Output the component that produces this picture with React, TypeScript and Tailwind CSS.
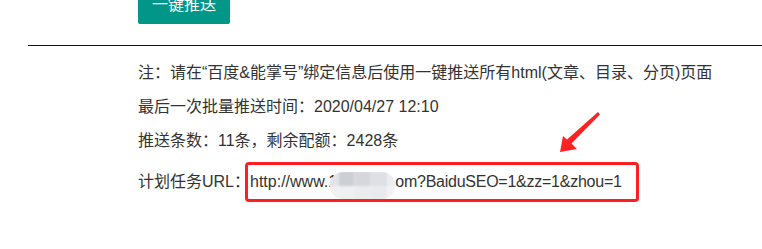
import React from 'react';

const mosaicTop = ['bg-[#e3e4e8]', 'bg-[#cdcfd6]', 'bg-[#d5d7dd]', 'bg-[#dfe0e5]', 'bg-[#ecedf0]'];
const mosaicBottom = ['bg-[#f1f1f3]', 'bg-[#eeeff1]', 'bg-[#ebecee]', 'bg-[#e9eaed]', 'bg-[#f2f2f4]'];
const mosaicCols = ['w-[11px]', 'w-[14px]', 'w-[15px]', 'w-[15px]', 'w-[10px]'];

const Mosaic: React.FC = () => (
  <div className="absolute left-[82px] top-[7px] w-[65px] h-[27px] rounded-[13px] overflow-hidden">
    <div className="flex flex-col w-full h-full blur-[1px] scale-110">
      {[mosaicTop, mosaicBottom].map((row, r) => (
        <div key={r} className="flex flex-1">
          {row.map((c, i) => (
            <div key={i} className={`${mosaicCols[i]} h-full ${c}`} />
          ))}
        </div>
      ))}
    </div>
  </div>
);

const App: React.FC = () => {
  return (
    <div className="relative w-[762px] h-[249px] overflow-hidden bg-white text-[#333] text-[16px] font-['Liberation_Sans','Noto_Sans_CJK_SC',sans-serif]">
      {/* push button, cut off at the top */}
      <div className="pl-[138px]">
        <button
          type="button"
          className="-mt-[14px] w-[92px] h-[38px] bg-[#009688] text-white text-[16px] rounded-[2px] flex items-center justify-center"
        >
          一键推送
        </button>
      </div>

      <div className="mt-[21px] ml-[28px] h-px bg-[#111]" />

      <div className="pl-[138px] pt-[10px]">
        <div className="h-[34px] flex items-center whitespace-nowrap">
          注：请在“百度&amp;能掌号”绑定信息后使用一键推送所有html(文章、目录、分页)页面
        </div>
        <div className="h-[34px] flex items-center whitespace-nowrap">最后一次批量推送时间：2020/04/27 12:10</div>
        <div className="h-[34px] flex items-center whitespace-nowrap">推送条数：11条，剩余配额：2428条</div>
        <div className="h-[48px] flex items-center whitespace-nowrap">
          <span>计划任务URL：</span>
          <div className="relative -ml-[5px] w-[394px] h-[40px] border-[3px] border-[#ff1f1f] rounded-[4px] flex items-center pl-[2px]">
            <span>http://www.</span>
            <span className="inline-block w-[67px]">1</span>
            <span className="tracking-[-0.25px]">om?BaiduSEO=1&amp;zz=1&amp;zhou=1</span>
            <Mosaic />
          </div>
        </div>
      </div>

      {/* annotation arrow */}
      <svg className="absolute left-0 top-0" width="762" height="249" viewBox="0 0 762 249">
        <polygon
          points="560,152 563,136 567,139.5 598,112 600,114.5 571.5,143.5 577,149"
          fill="#ff2222"
          strokeLinejoin="round"
        />
      </svg>
    </div>
  );
};

export default App;
